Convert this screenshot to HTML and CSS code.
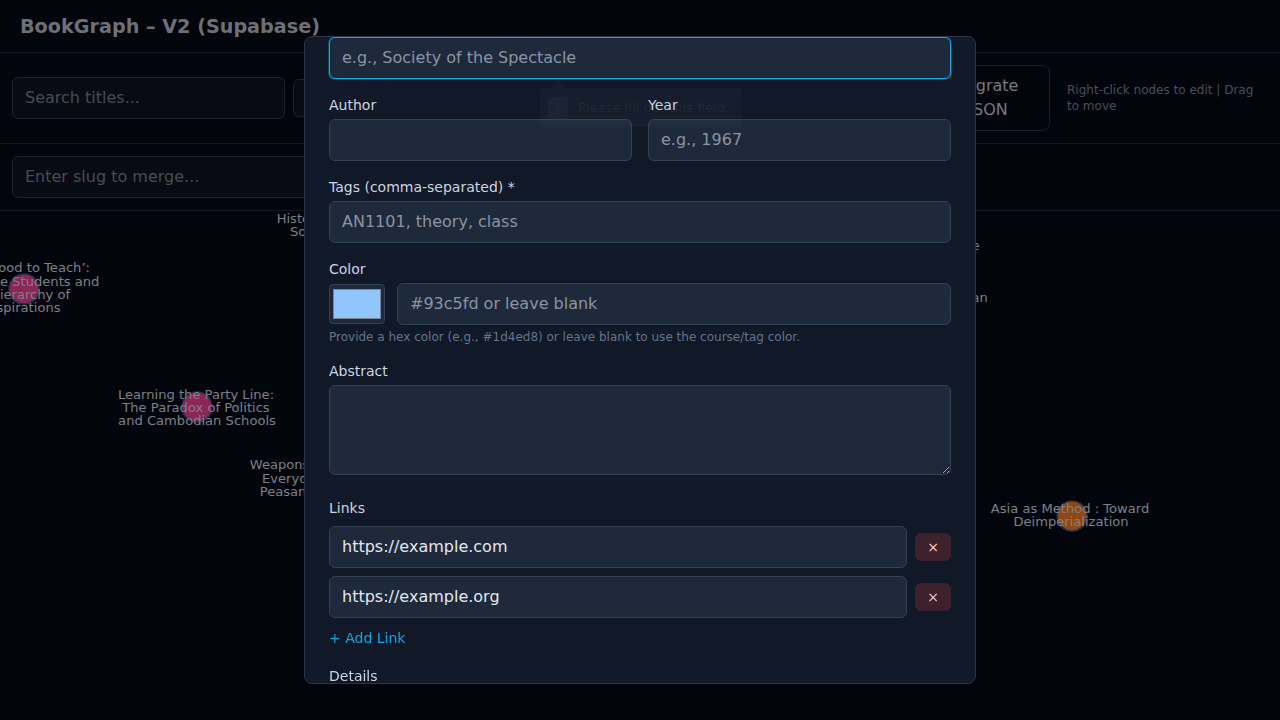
FILE: index.html
```html
<!DOCTYPE html>
<html lang="en">
<head>
<meta charset="utf-8">
<title>BookGraph – V2 (Supabase)</title>
<link rel="stylesheet" href="styles.css">
</head>
<body>
<div class="app">
  <header class="app-header">
    <h1 class="app-title">BookGraph – V2 (Supabase)</h1>
  </header>
  <div class="toolbar">
    <input class="field search" type="text" placeholder="Search titles...">
    <div class="toolbar-mid">
      <select class="field tag-filter"><option>All tags</option></select>
      <button class="btn">Add Book</button>
      <button class="btn">Export JSON</button>
      <button class="btn">Import JSON</button>
    </div>
    <button class="btn migrate">Migrate JSON</button>
    <p class="hint">Right-click nodes to edit | Drag to move</p>
  </div>
  <div class="merge-row">
    <input class="field merge" type="text" placeholder="Enter slug to merge...">
    <button class="btn">Merge</button>
  </div>
  <div class="graph">
    <svg class="graph-svg" width="1280" height="509" viewBox="0 0 1280 509">
      <g class="node">
        <circle cx="343" cy="15" r="15" class="dot pink"/>
        <text class="node-label" text-anchor="middle"><tspan x="343" y="12">History of Education</tspan><tspan x="343" y="25">Southeast Asian</tspan></text>
      </g>
      <g class="node">
        <circle cx="24" cy="78" r="15" class="dot pink"/>
        <text class="node-label" text-anchor="middle"><tspan x="24" y="61">‘Too Good to Teach’:</tspan><tspan x="24" y="75">Japanese Students and</tspan><tspan x="24" y="88">a Hierarchy of</tspan><tspan x="24" y="101">Aspirations</tspan></text>
      </g>
      <g class="node">
        <circle cx="197" cy="196" r="15" class="dot pink"/>
        <text class="node-label" text-anchor="middle"><tspan x="196" y="188">Learning the Party Line:</tspan><tspan x="196" y="201">The Paradox of Politics</tspan><tspan x="197" y="214">and Cambodian Schools</tspan></text>
      </g>
      <g class="node">
        <circle cx="323" cy="267" r="15" class="dot pink"/>
        <text class="node-label" text-anchor="middle"><tspan x="323" y="258">Weapons of the Weak:</tspan><tspan x="323" y="272">Everyday Forms of</tspan><tspan x="323" y="285">Peasant Resistance</tspan></text>
      </g>
      <g class="node">
        <circle cx="895" cy="40" r="15" class="dot pink"/>
        <text class="node-label" text-anchor="middle"><tspan x="896" y="39">The Politics of Knowledge</tspan><tspan x="896" y="52">in Education</tspan></text>
      </g>
      <g class="node">
        <circle cx="924" cy="93" r="15" class="dot pink"/>
        <text class="node-label" text-anchor="middle"><tspan x="924" y="91">Modern Cambodian</tspan><tspan x="924" y="104">Society</tspan></text>
      </g>
      <g class="node">
        <circle cx="1072" cy="305" r="15" class="dot orange"/>
        <text class="node-label" text-anchor="middle"><tspan x="1070" y="302">Asia as Method : Toward</tspan><tspan x="1071" y="315">Deimperialization</tspan></text>
      </g>
    </svg>
  </div>
</div>

<div class="overlay">
  <div class="modal">
    <input class="input focused" type="text" placeholder="e.g., Society of the Spectacle">
    <div class="two-col">
      <div class="group">
        <label class="label">Author</label>
        <input class="input" type="text">
      </div>
      <div class="group">
        <label class="label">Year</label>
        <input class="input" type="text" placeholder="e.g., 1967">
      </div>
    </div>
    <div class="group gap-below">
      <label class="label">Tags (comma-separated) *</label>
      <input class="input" type="text" placeholder="AN1101, theory, class">
    </div>
    <div class="group gap-below">
      <label class="label">Color</label>
      <div class="color-row">
        <div class="swatch-box"><span class="swatch"></span></div>
        <input class="input" type="text" placeholder="#93c5fd or leave blank">
      </div>
      <p class="help">Provide a hex color (e.g., #1d4ed8) or leave blank to use the course/tag color.</p>
    </div>
    <div class="group abstract-group">
      <label class="label">Abstract</label>
      <textarea class="input textarea"></textarea>
    </div>
    <div class="group">
      <label class="label links-label">Links</label>
      <div class="links">
        <div class="link-row">
          <input class="input" type="text" value="https://example.com">
          <button class="remove">×</button>
        </div>
        <div class="link-row">
          <input class="input" type="text" value="https://example.org">
          <button class="remove">×</button>
        </div>
      </div>
      <button class="add-link">+ Add Link</button>
    </div>
    <div class="group details-group">
      <label class="label">Details</label>
      <textarea class="input textarea"></textarea>
    </div>
  </div>
  <div class="tooltip"><span class="tip-icon">!</span>Please fill out this field.</div>
</div>
</body>
</html>
```

FILE: styles.css
```css
* { box-sizing: border-box; }

html, body {
  margin: 0;
  padding: 0;
  height: 100%;
}

body {
  background: #03050c;
  font-family: "DejaVu Sans", "Noto Sans", sans-serif;
  color: #6e7076;
  overflow: hidden;
}

.app {
  display: flex;
  flex-direction: column;
  height: 720px;
}

.app-header {
  padding: 13px 20px 11px;
  border-bottom: 1px solid #141925;
}

.app-title {
  margin: 0;
  font-size: 19.2px;
  line-height: 28px;
  font-weight: bold;
  color: #6e7076;
}

.toolbar {
  display: flex;
  align-items: center;
  padding: 12px;
  border-bottom: 1px solid #141925;
}

.field {
  height: 42px;
  padding: 0 12px 2px;
  background: #080b13;
  border: 1px solid #1b212e;
  border-radius: 6px;
  color: #7a7d84;
  font-family: inherit;
  font-size: 16px;
  outline: none;
}

.field::placeholder { color: #474b54; }

.search { width: 273px; flex: none; }

.toolbar-mid {
  flex: none;
  width: 625px;
  margin-left: 8px;
  display: flex;
  align-items: center;
  gap: 8px;
}

.tag-filter { height: 38px; width: 180px; }

.btn {
  background: transparent;
  border: 1px solid #1b212e;
  border-radius: 8px;
  color: #76797f;
  font-family: inherit;
  font-size: 16px;
  line-height: 24px;
  padding: 8px 16px;
}

.migrate {
  flex: none;
  width: 124px;
  margin-left: 8px;
  text-align: center;
}

.hint {
  flex: none;
  width: 201px;
  margin: 0 0 0 17px;
  font-size: 12px;
  line-height: 16px;
  color: #4a4e57;
}

.merge-row {
  display: flex;
  align-items: center;
  gap: 8px;
  padding: 12px;
  border-bottom: 1px solid #141925;
}

.merge { width: 420px; }

.graph {
  position: relative;
  flex: 1;
  overflow: hidden;
}

.graph-svg { display: block; }

.dot { stroke: #1c3450; stroke-width: 1.5; }
.dot.pink { fill: #8c2656; }
.dot.orange { fill: #93470f; }

.node-label {
  font-family: "DejaVu Sans", sans-serif;
  font-size: 13.1px;
  fill: #7c8089;
}

/* modal */
.overlay {
  position: fixed;
  inset: 0;
  display: flex;
  align-items: center;
  justify-content: center;
}

.modal {
  width: 672px;
  height: 90vh;
  overflow: hidden;
  background: #111827;
  border: 1px solid #2a3547;
  border-radius: 8px;
  padding: 0 24px;
}

.input {
  display: block;
  width: 100%;
  height: 42px;
  padding: 0 12px 2px;
  background: #1e293b;
  border: 1px solid #334155;
  border-radius: 6px;
  color: #e2e8f0;
  font-family: inherit;
  font-size: 16px;
  outline: none;
}

.input::placeholder { color: #8a94a4; }

.input.focused {
  border-color: #0ea5e9;
  box-shadow: 0 0 0 1px rgba(14, 165, 233, 0.35);
  margin-bottom: 16px;
}

.two-col {
  display: grid;
  grid-template-columns: 1fr 1fr;
  gap: 16px;
  margin-bottom: 16px;
}

.gap-below { margin-bottom: 16px; }

.label {
  display: block;
  font-size: 14px;
  line-height: 20px;
  margin-bottom: 4px;
  color: #cbd5e1;
}

.color-row {
  display: flex;
  align-items: center;
  gap: 12px;
}

.swatch-box {
  flex: none;
  width: 56px;
  height: 40px;
  padding: 4px 3px;
  background: #1e293b;
  border: 1px solid #334155;
  border-radius: 4px;
  display: flex;
}

.swatch {
  flex: 1;
  background: #93c5fd;
  border: 1px solid #7b8696;
}

.help {
  margin: 4px 0 0;
  font-size: 12px;
  line-height: 16px;
  color: #64748b;
}

.textarea {
  height: 90px;
  padding: 10px 12px;
  resize: vertical;
}

.abstract-group { margin-bottom: 23px; }

.links-label { margin-bottom: 8px; }

.links {
  display: flex;
  flex-direction: column;
  gap: 8px;
}

.link-row {
  display: flex;
  align-items: center;
  gap: 8px;
}

.remove {
  flex: none;
  width: 36px;
  height: 28px;
  border: none;
  border-radius: 6px;
  background: rgba(239, 68, 68, 0.2);
  color: #fecaca;
  font-family: inherit;
  font-size: 14px;
  padding: 0;
}

.add-link {
  display: block;
  margin-top: 10px;
  padding: 0;
  background: none;
  border: none;
  color: #0ea5e9;
  font-family: inherit;
  font-size: 14px;
  line-height: 20px;
}

.details-group { margin-top: 18px; }

/* fading validation bubble */
.tooltip {
  position: absolute;
  top: 88px;
  left: 540px;
  width: 202px;
  height: 39px;
  display: flex;
  align-items: center;
  gap: 10px;
  padding: 0 8px;
  border-radius: 4px;
  background: rgba(148, 163, 184, 0.04);
  color: rgba(203, 213, 225, 0.07);
  font-size: 13px;
}

.tooltip::before {
  content: "";
  position: absolute;
  top: -9px;
  left: 10px;
  border-left: 8px solid transparent;
  border-right: 8px solid transparent;
  border-bottom: 9px solid rgba(148, 163, 184, 0.04);
}

.tip-icon {
  flex: none;
  width: 20px;
  height: 22px;
  border-radius: 3px;
  background: rgba(148, 163, 184, 0.05);
  color: rgba(203, 213, 225, 0.05);
  font-size: 12px;
  font-weight: bold;
  text-align: center;
  line-height: 22px;
}
```
